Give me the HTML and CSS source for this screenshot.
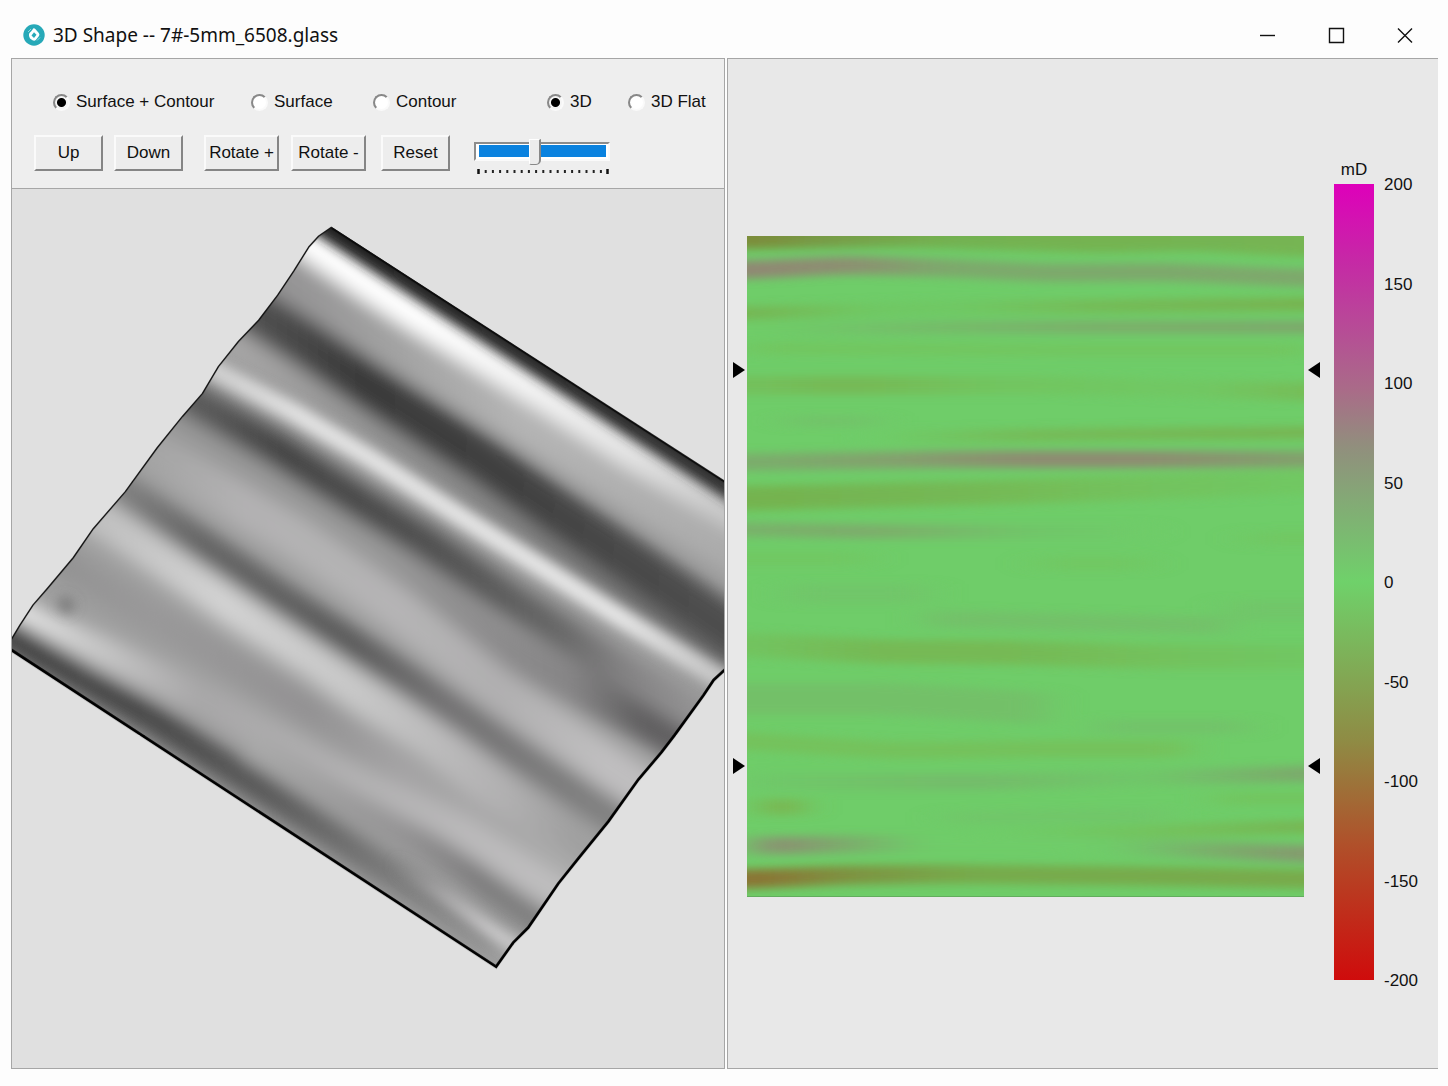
FILE: index.html
```html
<!DOCTYPE html>
<html lang="en">
<head>
<meta charset="utf-8">
<meta name="viewport" content="width=device-width, initial-scale=1">
<title>3D Shape -- 7#-5mm_6508.glass</title>
<link rel="stylesheet" href="styles.css">
</head>
<body>
<div class="window">
  <header class="titlebar">
    <svg class="app-icon" viewBox="0 0 22 22" aria-hidden="true">
      <circle cx="11" cy="11" r="10.700" fill="#27a9b8"/>
      <path d="M10.500 4.300 Q11.500 4 12.300 5 L15.800 9 Q17 10.300 16 12 L13 15.800 Q11.500 17.300 9.500 16.300 L7 14.500 Q5.500 12.500 6 10 Q6.300 8.500 8 7.500 Z" fill="#fff"/>
      <path d="M11 8.300 L13.500 10.800 L11 14 L8.500 11.500 Z" fill="#27a9b8"/>
      <path d="M5 8 L8 5 M14 16.500 L17 13.500" stroke="#8fd6dd" stroke-width="1" fill="none"/>
    </svg>
    <h1 class="title">3D Shape -- 7#-5mm_6508.glass</h1>
    <div class="window-buttons">
      <button class="window-button" type="button" aria-label="Minimize"><svg viewBox="0 0 17 17"><path d="M1 8.500H16"/></svg></button>
      <button class="window-button" type="button" aria-label="Maximize"><svg viewBox="0 0 17 17"><path d="M1.500 1.500H15.500V15.500H1.500Z"/></svg></button>
      <button class="window-button" type="button" aria-label="Close"><svg viewBox="0 0 17 17"><path d="M1 1.500L15 15.500M15 1.500L1 15.500"/></svg></button>
    </div>
  </header>

  <main class="panes">
    <section class="shape-pane">
      <form class="toolbar">
        <div class="options">
          <label class="option"><input type="radio" name="layer" checked>Surface + Contour</label>
          <label class="option"><input type="radio" name="layer">Surface</label>
          <label class="option"><input type="radio" name="layer">Contour</label>
          <label class="option"><input type="radio" name="view" checked>3D</label>
          <label class="option"><input type="radio" name="view">3D Flat</label>
        </div>
        <div class="actions">
          <button class="push" type="button">Up</button>
          <button class="push" type="button">Down</button>
          <button class="push wide" type="button">Rotate +</button>
          <button class="push wide" type="button">Rotate -</button>
          <button class="push" type="button">Reset</button>
          <div class="zoom">
            <input class="slider" type="range" min="0" max="18" value="8" aria-label="Scale">
            <svg class="ticks" viewBox="0 0 136 6" aria-hidden="true">
              <path d="M11.700 2v3M18.900 2v3M26.100 2v3M33.300 2v3M40.500 2v3M47.700 2v3M54.900 2v3M62.100 2v3M69.300 2v3M76.500 2v3M83.700 2v3M90.900 2v3M98.100 2v3M105.300 2v3M112.500 2v3M119.700 2v3M126.900 2v3" stroke="#222" stroke-width="2"/>
              <path d="M4.500 1v5M133.500 1v5" stroke="#111" stroke-width="2.500"/>
            </svg>
          </div>
        </div>
      </form>

      <div class="stage">
        <svg class="surface" viewBox="12 190 712 877" preserveAspectRatio="xMinYMin slice" role="img" aria-label="Surface view">
          <defs>
            <clipPath id="sheet"><path d="M331 228L318 237L308 248L293 272L277 296L258 321L238 342L218 367L202 394L182 417L157 448L125 492L93 529L73 558L47 589L33 605L20 625L11 640V650L495 966L512 942L527 927L557 883L577 858L607 821L637 779L660 752L673 735L702 695L712 680L726 667V484Z"/></clipPath>
            <filter id="soft" filterUnits="userSpaceOnUse" x="-60" y="150" width="900" height="900"><feGaussianBlur stdDeviation="9"/></filter>
            <filter id="fine" filterUnits="userSpaceOnUse" x="-60" y="150" width="900" height="900"><feGaussianBlur stdDeviation="6"/></filter>
            <linearGradient id="s1" gradientUnits="userSpaceOnUse" x1="0" y1="0" x2="1000" y2="0"><stop offset=".33" stop-color="#222"/><stop offset=".72" stop-color="#343434"/></linearGradient>
            <linearGradient id="s2" gradientUnits="userSpaceOnUse" x1="0" y1="0" x2="1000" y2="0"><stop offset=".42" stop-color="#fff"/><stop offset=".54" stop-color="#f2f2f2"/><stop offset=".63" stop-color="#e4e4e4"/><stop offset=".72" stop-color="#cacaca"/></linearGradient>
            <linearGradient id="s3" gradientUnits="userSpaceOnUse" x1="0" y1="0" x2="1000" y2="0"><stop offset=".29" stop-color="#959495"/><stop offset=".38" stop-color="#a0a0a0"/><stop offset=".52" stop-color="#b4b4b4"/><stop offset=".72" stop-color="#acacac"/></linearGradient>
            <linearGradient id="s4" gradientUnits="userSpaceOnUse" x1="0" y1="0" x2="1000" y2="0"><stop offset=".26" stop-color="#505050"/><stop offset=".36" stop-color="#3a3a3a"/><stop offset=".5" stop-color="#404040"/><stop offset=".71" stop-color="#4e4e4e"/></linearGradient>
            <linearGradient id="s4b" gradientUnits="userSpaceOnUse" x1="0" y1="0" x2="1000" y2="0"><stop offset=".24" stop-color="#a6a5a5"/><stop offset=".36" stop-color="#949494"/><stop offset=".5" stop-color="#848484"/><stop offset=".71" stop-color="#666"/></linearGradient>
            <linearGradient id="s5" gradientUnits="userSpaceOnUse" x1="0" y1="0" x2="1000" y2="0"><stop offset=".22" stop-color="#d0d0d0"/><stop offset=".3" stop-color="#e2e2e2"/><stop offset=".62" stop-color="#e6e6e6"/><stop offset=".71" stop-color="#c8c8c8"/></linearGradient>
            <linearGradient id="s6" gradientUnits="userSpaceOnUse" x1="0" y1="0" x2="1000" y2="0"><stop offset=".2" stop-color="#5a5a5a"/><stop offset=".28" stop-color="#444"/><stop offset=".43" stop-color="#505050"/><stop offset=".56" stop-color="#686868"/><stop offset=".62" stop-color="#828182"/><stop offset=".7" stop-color="#949394"/></linearGradient>
            <linearGradient id="s7" gradientUnits="userSpaceOnUse" x1="0" y1="0" x2="1000" y2="0"><stop offset=".19" stop-color="#979797"/><stop offset=".37" stop-color="#989898"/><stop offset=".49" stop-color="#8d8c8d"/><stop offset=".57" stop-color="#868586"/><stop offset=".64" stop-color="#605f60"/></linearGradient>
            <linearGradient id="s8" gradientUnits="userSpaceOnUse" x1="0" y1="0" x2="1000" y2="0"><stop offset=".15" stop-color="#a4a4a4"/><stop offset=".24" stop-color="#b2b1b2"/><stop offset=".4" stop-color="#b5b4b5"/><stop offset=".5" stop-color="#b0afb0"/><stop offset=".6" stop-color="#bfbebf"/></linearGradient>
            <linearGradient id="s9" gradientUnits="userSpaceOnUse" x1="0" y1="0" x2="1000" y2="0"><stop offset=".12" stop-color="#808080"/><stop offset=".2" stop-color="#646464"/><stop offset=".35" stop-color="#5a5a5a"/><stop offset=".44" stop-color="#727172"/><stop offset=".6" stop-color="#808080"/></linearGradient>
            <linearGradient id="s10" gradientUnits="userSpaceOnUse" x1="0" y1="0" x2="1000" y2="0"><stop offset=".1" stop-color="#c0c0c0"/><stop offset=".22" stop-color="#d2d2d2"/><stop offset=".35" stop-color="#c8c8c8"/><stop offset=".5" stop-color="#b2b1b2"/><stop offset=".57" stop-color="#a0a0a0"/></linearGradient>
            <linearGradient id="s11" gradientUnits="userSpaceOnUse" x1="0" y1="0" x2="1000" y2="0"><stop offset=".05" stop-color="#929292"/><stop offset=".15" stop-color="#999899"/><stop offset=".31" stop-color="#939293"/><stop offset=".4" stop-color="#a4a3a4"/><stop offset=".55" stop-color="#aaa"/></linearGradient>
            <linearGradient id="s12" gradientUnits="userSpaceOnUse" x1="0" y1="0" x2="1000" y2="0"><stop offset=".02" stop-color="#e8e8e8"/><stop offset=".08" stop-color="#ccc"/><stop offset=".2" stop-color="#a8a7a8"/><stop offset=".32" stop-color="#b0afb0"/><stop offset=".53" stop-color="#bebdbe"/></linearGradient>
            <linearGradient id="s13" gradientUnits="userSpaceOnUse" x1="0" y1="0" x2="1000" y2="0"><stop offset=".25" stop-color="#aaa"/><stop offset=".4" stop-color="#949394"/><stop offset=".48" stop-color="#7b7a7b"/><stop offset=".53" stop-color="#7e7e7e"/></linearGradient>
            <linearGradient id="s14" gradientUnits="userSpaceOnUse" x1="0" y1="0" x2="1000" y2="0"><stop offset=".39" stop-color="#8c8c8c" stop-opacity="0"/><stop offset=".44" stop-color="#a5a4a5"/><stop offset=".49" stop-color="#c8c7c8"/></linearGradient>
            <linearGradient id="s15" gradientUnits="userSpaceOnUse" x1="0" y1="0" x2="1000" y2="0"><stop offset=".02" stop-color="#404040"/><stop offset=".15" stop-color="#484848"/><stop offset=".27" stop-color="#5a5a5a"/><stop offset=".34" stop-color="#6c6c6c"/><stop offset=".48" stop-color="#909090"/></linearGradient>
          </defs>
          <g clip-path="url(#sheet)">
            <path d="M0 180H740V1000H0Z" fill="#9e9e9e"/>
            <g filter="url(#soft)" fill="none" stroke-linejoin="round">
              <path d="M260 262L295 285L370 333L527 425L660 507L760 567" stroke="url(#s3)" stroke-width="44"/>
              <path d="M200 320L243 347L370 427L480 500L627 590L760 670" stroke="url(#s4b)" stroke-width="34"/>
              <path d="M220 290L262 317L303 343L370 388L477 457L560 515L627 560L710 617L780 664" stroke="url(#s4)" stroke-width="46"/>
              <path d="M150 410L190 437L277 484L370 545L493 640L560 677L647 722L700 752" stroke="url(#s7)" stroke-width="40"/>
              <path d="M120 430L157 455L243 507L293 537L400 612L510 700L593 757L670 808" stroke="url(#s8)" stroke-width="42"/>
              <path d="M160 378L198 404L277 450L360 503L427 544L510 600L567 636L640 682L720 730" stroke="url(#s6)" stroke-width="34"/>
              <path d="M70 500L110 522L160 556L233 606L317 660L363 694L427 736L493 787L560 830L620 870" stroke="url(#s10)" stroke-width="42"/>
              <path d="M90 468L133 498L197 542L277 596L360 650L410 682L493 738L543 772L593 805L660 850" stroke="url(#s9)" stroke-width="32"/>
              <path d="M30 540L83 575L133 606L200 645L317 715L370 748L427 787L580 880" stroke="url(#s11)" stroke-width="30"/>
              <path d="M-20 592L30 623L100 652L200 698L317 764L460 832L527 875L600 920" stroke="url(#s12)" stroke-width="34"/>
              <path d="M250 745L333 795L427 845L470 873L520 909L580 950" stroke="url(#s13)" stroke-width="26"/>
              <path d="M-20 617L30 647L67 669L150 718L267 793L333 836L400 880L495 942" stroke="url(#s15)" stroke-width="30"/>
              <path d="M270 216L315 248L370 286L410 312L547 397L627 450L723 507L760 529" stroke="url(#s2)" stroke-width="34"/>
            </g>
            <g filter="url(#fine)" fill="none" stroke-linejoin="round">
              <path d="M311 215L331 228L760 506" stroke="url(#s1)" stroke-width="28"/>
              <path d="M170 344L218 373L293 413L365 456L460 517L547 572L610 612L707 672L760 705" stroke="url(#s5)" stroke-width="19"/>
              <path d="M390 862L443 894L487 927L520 950" stroke="url(#s14)" stroke-width="15"/>
              <path d="M60 600L72 610" stroke="#6c6c6c" stroke-width="14" opacity=".7"/>
            </g>
          </g>
          <path d="M726 484L331 229" fill="none" stroke="#0c0c0c" stroke-width="2"/>
          <path d="M331 228L318 237L308 248L293 272L277 296L258 321L238 342L218 367L202 394L182 417L157 448L125 492L93 529L73 558L47 589L33 605L20 625L11 640" fill="none" stroke="#111" stroke-width="1.400" stroke-linejoin="round"/>
          <path d="M10 649L495 966L512 942L527 927L557 883L577 858L607 821L637 779L660 752L673 735L702 695L712 680L726 667" fill="none" stroke="#000" stroke-width="2.800"/>
        </svg>
      </div>
    </section>

    <section class="map-pane">
      <div class="map">
        <svg class="heat" viewBox="0 0 557 660" preserveAspectRatio="none" role="img" aria-label="Distortion map">
          <defs>
            <filter id="haze" filterUnits="userSpaceOnUse" x="-80" y="-40" width="720" height="740"><feGaussianBlur stdDeviation="18 4"/></filter>
            <linearGradient id="ga" gradientUnits="userSpaceOnUse" x1="0" y1="0" x2="1000" y2="0"><stop offset=".01" stop-color="#7c8c3a"/><stop offset=".06" stop-color="#789845"/><stop offset=".2" stop-color="#73b151"/><stop offset=".557" stop-color="#76b552"/></linearGradient>
            <linearGradient id="gb" gradientUnits="userSpaceOnUse" x1="0" y1="0" x2="1000" y2="0"><stop offset=".02" stop-color="#908873"/><stop offset=".11" stop-color="#8c9071"/><stop offset=".2" stop-color="#7da96c"/><stop offset=".557" stop-color="#7ea86c"/></linearGradient>
            <linearGradient id="gc" gradientUnits="userSpaceOnUse" x1="0" y1="0" x2="1000" y2="0"><stop offset="0" stop-color="#76b552"/><stop offset=".12" stop-color="#70c763"/><stop offset=".22" stop-color="#70c763"/><stop offset=".35" stop-color="#75ba56"/><stop offset=".557" stop-color="#77b350"/></linearGradient>
            <linearGradient id="gd" gradientUnits="userSpaceOnUse" x1="0" y1="0" x2="1000" y2="0"><stop offset=".02" stop-color="#6fcc68"/><stop offset=".15" stop-color="#74be69"/><stop offset=".32" stop-color="#7ab06a"/><stop offset=".557" stop-color="#7da86c"/></linearGradient>
            <linearGradient id="gf" gradientUnits="userSpaceOnUse" x1="0" y1="0" x2="1000" y2="0"><stop offset="0" stop-color="#73c15d"/><stop offset=".1" stop-color="#77b855"/><stop offset=".25" stop-color="#72c560"/><stop offset=".45" stop-color="#71c864"/><stop offset=".557" stop-color="#76bd58"/></linearGradient>
            <linearGradient id="gh" gradientUnits="userSpaceOnUse" x1="0" y1="0" x2="1000" y2="0"><stop offset=".14" stop-color="#6fcc68"/><stop offset=".28" stop-color="#76ba57"/><stop offset=".557" stop-color="#77b552"/></linearGradient>
            <linearGradient id="gi" gradientUnits="userSpaceOnUse" x1="0" y1="0" x2="1000" y2="0"><stop offset="0" stop-color="#7bad6c"/><stop offset=".15" stop-color="#84a06e"/><stop offset=".28" stop-color="#8e8b72"/><stop offset=".4" stop-color="#8e8c72"/><stop offset=".557" stop-color="#82a16d"/></linearGradient>
            <linearGradient id="gj" gradientUnits="userSpaceOnUse" x1="0" y1="0" x2="1000" y2="0"><stop offset=".02" stop-color="#75b350"/><stop offset=".23" stop-color="#75b955"/><stop offset=".38" stop-color="#73c25d"/><stop offset=".557" stop-color="#71c863"/></linearGradient>
            <linearGradient id="gk" gradientUnits="userSpaceOnUse" x1="0" y1="0" x2="1000" y2="0"><stop offset="0" stop-color="#79b16b"/><stop offset=".12" stop-color="#7eab6c"/><stop offset=".28" stop-color="#71c569"/><stop offset=".4" stop-color="#6fcc69"/></linearGradient>
            <linearGradient id="gn" gradientUnits="userSpaceOnUse" x1="0" y1="0" x2="1000" y2="0"><stop offset="0" stop-color="#72c460"/><stop offset=".13" stop-color="#76b955"/><stop offset=".26" stop-color="#76b955"/><stop offset=".42" stop-color="#73c25d"/><stop offset=".557" stop-color="#71c763"/></linearGradient>
            <linearGradient id="gq" gradientUnits="userSpaceOnUse" x1="0" y1="0" x2="1000" y2="0"><stop offset=".02" stop-color="#70c869"/><stop offset=".22" stop-color="#74bb6a"/><stop offset=".4" stop-color="#70c769"/><stop offset=".557" stop-color="#7ca96c"/></linearGradient>
            <linearGradient id="gs" gradientUnits="userSpaceOnUse" x1="0" y1="0" x2="1000" y2="0"><stop offset=".24" stop-color="#6fcc68"/><stop offset=".4" stop-color="#73c35e"/><stop offset=".557" stop-color="#77b653"/></linearGradient>
            <linearGradient id="gt" gradientUnits="userSpaceOnUse" x1="0" y1="0" x2="1000" y2="0"><stop offset=".03" stop-color="#8b9072"/><stop offset=".1" stop-color="#7cac6c"/><stop offset=".18" stop-color="#6fcc69"/><stop offset=".36" stop-color="#6fcc69"/><stop offset=".47" stop-color="#7bad6b"/><stop offset=".557" stop-color="#859a6f"/></linearGradient>
            <linearGradient id="gu" gradientUnits="userSpaceOnUse" x1="0" y1="0" x2="1000" y2="0"><stop offset=".02" stop-color="#8a7535"/><stop offset=".1" stop-color="#7e9241"/><stop offset=".22" stop-color="#77aa4b"/><stop offset=".557" stop-color="#78aa4b"/></linearGradient>
          </defs>
          <path d="M0 0H557V660H0Z" fill="#6fcd69"/>
          <g filter="url(#haze)" fill="none" stroke-linejoin="round">
            <path d="M-60 -2H0L150 -4L350 2L450 0L557 6H620" stroke="url(#ga)" stroke-width="30"/>
            <path d="M-60 34H0L100 29L200 32L300 37L420 36L557 42H620" stroke="url(#gb)" stroke-width="18"/>
            <path d="M-60 77H0L200 71L350 70L557 68H620" stroke="url(#gc)" stroke-width="13"/>
            <path d="M-60 94H0L200 91L620 91" stroke="url(#gd)" stroke-width="13"/>
            <path d="M0 112L330 114H560" stroke="#74c35c" stroke-width="12" opacity=".7"/>
            <path d="M-60 149H300L620 157" stroke="url(#gf)" stroke-width="18"/>
            <path d="M40 185H130" stroke="#74bd69" stroke-width="10" opacity=".6"/>
            <path d="M130 201L350 198L620 196" stroke="url(#gh)" stroke-width="12"/>
            <path d="M-60 226H0L200 223H620" stroke="url(#gi)" stroke-width="17"/>
            <path d="M-60 262H0L250 256L557 246H620" stroke="url(#gj)" stroke-width="24"/>
            <path d="M-60 293H0L120 295H400" stroke="url(#gk)" stroke-width="14"/>
            <path d="M500 302H620M-40 322H120M290 327H400" stroke="#74c45d" stroke-width="14" opacity=".5"/>
            <path d="M40 357H180M480 374H620" stroke="#73c169" stroke-width="20" opacity=".6"/>
            <path d="M180 382L340 386L480 389" stroke="#76b96a" stroke-width="17" opacity=".6"/>
            <path d="M-60 408H0L130 415L260 416L400 420L620 420" stroke="url(#gn)" stroke-width="24"/>
            <path d="M-60 462H140L300 472" stroke="#75bb6a" stroke-width="32" opacity=".7"/>
            <path d="M350 490H500" stroke="#74bd6a" stroke-width="14" opacity=".6"/>
            <path d="M-40 502L150 514L300 512L440 512" stroke="#75bf59" stroke-width="17" opacity=".85"/>
            <path d="M0 545H250L557 537H620" stroke="url(#gq)" stroke-width="16"/>
            <path d="M18 570H52" stroke="#7db04c" stroke-width="16"/>
            <path d="M470 562H620" stroke="#73c35d" stroke-width="12" opacity=".8"/>
            <path d="M200 581L420 578" stroke="#73c169" stroke-width="12" opacity=".6"/>
            <path d="M240 600L350 596L557 590H620" stroke="url(#gs)" stroke-width="13"/>
            <path d="M6 609L120 607H300L557 617H620" stroke="url(#gt)" stroke-width="17"/>
            <path d="M-60 642H0L100 638L200 637L400 639L557 642H620" stroke="url(#gu)" stroke-width="19"/>
          </g>
          <path d="M0 659.500H557" stroke="#62ad5d" stroke-width="1"/>
        </svg>
        <svg class="marker left upper" viewBox="0 0 12 16"><path d="M0 0L12 8L0 16Z"/></svg>
        <svg class="marker left lower" viewBox="0 0 12 16"><path d="M0 0L12 8L0 16Z"/></svg>
        <svg class="marker right upper" viewBox="0 0 12 16"><path d="M12 0L0 8L12 16Z"/></svg>
        <svg class="marker right lower" viewBox="0 0 12 16"><path d="M12 0L0 8L12 16Z"/></svg>
      </div>
      <div class="legend">
        <div class="unit">mD</div>
        <div class="scale">
          <div class="ramp"></div>
          <ol class="values">
            <li>200</li><li>150</li><li>100</li><li>50</li><li>0</li><li>-50</li><li>-100</li><li>-150</li><li>-200</li>
          </ol>
        </div>
      </div>
    </section>
  </main>
</div>
</body>
</html>
```
FILE: styles.css
```css
* { box-sizing: border-box; }

body {
  margin: 0;
  background: #fdfdfd;
  color: #111;
  font: 17px/20px "Liberation Sans", Arial, sans-serif;
}

.window {
  display: flex;
  flex-direction: column;
  min-height: 100vh;
  padding: 0 10px 17px 11px;
}

.titlebar {
  display: flex;
  align-items: center;
  height: 58px;
  padding: 12px 24px 0 12px;
}

.app-icon { width: 22px; height: 22px; }

.title {
  flex: 1;
  margin: 0 0 0 8px;
  font: 400 19px/24px "Noto Sans", "Segoe UI", sans-serif;
}

.window-buttons { display: flex; gap: 52px; }

.window-button {
  width: 17px;
  height: 17px;
  padding: 0;
  border: 0;
  background: none;
}

.window-button svg {
  display: block;
  fill: none;
  stroke: #111;
  stroke-width: 1.4;
}

.panes {
  flex: 1;
  display: grid;
  grid-template-columns: 716fr 711fr;
}

.shape-pane {
  display: flex;
  flex-direction: column;
  margin-right: 2px;
  border: 1px solid #a6a6a6;
  border-right: 0;
  background: #eee;
}

.toolbar {
  height: 130px;
  padding: 33px 0 0 22px;
  border-right: 1px solid #a6a6a6;
  border-bottom: 1px solid #a6a6a6;
}

.options {
  display: grid;
  grid-template-columns: 198px 122px 174px 81px auto;
  padding-left: 19px;
}

.option {
  display: flex;
  align-items: center;
  gap: 6px;
  white-space: nowrap;
}

.option input {
  appearance: none;
  width: 17px;
  height: 17px;
  margin: 0;
  border: 2px solid;
  border-color: #888 #fafafa #fafafa #888;
  border-radius: 50%;
  background: #fff;
}

.option input:checked {
  background: radial-gradient(circle, #000 4px, #f4f4f4 5px);
}

.actions {
  display: grid;
  grid-template-columns: 80px 90px 87px 90px 93px auto;
  margin-top: 23px;
}

.push {
  width: 69px;
  height: 36px;
  padding: 0;
  border: 2px solid;
  border-color: #fafafa #858585 #858585 #fafafa;
  background: #ededed;
  color: inherit;
  font: inherit;
  white-space: nowrap;
}

.push.wide { width: 75px; }

.zoom { width: 136px; padding-top: 3px; }

.slider {
  display: block;
  appearance: none;
  width: 100%;
  height: 26px;
  margin: 0;
  background: none;
}

.slider::-webkit-slider-runnable-track {
  height: 19px;
  border: 2px solid;
  border-color: #8c8c8c #fafafa #fafafa #8c8c8c;
  background: linear-gradient(#0a82df, #0a82df) center / 127px 12px no-repeat, #fff;
}

.slider::-webkit-slider-thumb {
  appearance: none;
  width: 12px;
  height: 26px;
  margin-top: -5px;
  border: 1px solid;
  border-color: #fff #888 #888 #fff;
  border-right-width: 2px;
  border-radius: 0 0 5px 2px;
  background: #ececec;
}

.ticks { display: block; width: 100%; height: 6px; margin-top: 4px; }

.stage {
  flex: 1;
  position: relative;
  min-height: 400px;
  border-right: 1px solid #a6a6a6;
  background: #e0e0e0;
}

.surface {
  position: absolute;
  inset: 0;
  width: 100%;
  height: 100%;
}

.map-pane {
  display: flex;
  border: 1px solid #a6a6a6;
  border-right: 0;
  background: #e8e8e8;
}

.map {
  flex: 1;
  position: relative;
  margin: 177px 30px 171px 19px;
}

.heat { display: block; width: 100%; height: 100%; position: absolute; inset: 0; }

.marker { position: absolute; width: 12px; height: 16px; }
.marker.left { left: -14px; }
.marker.right { right: -16px; }
.marker.upper { top: 19%; }
.marker.lower { top: 79%; }

.legend {
  display: flex;
  flex-direction: column;
  padding: 99px 0 88px;
}

.unit { width: 40px; height: 26px; line-height: 24px; text-align: center; }

.scale { flex: 1; display: flex; gap: 10px; }

.ramp {
  width: 40px;
  background: linear-gradient(#de00ba, #c52aa5 10%, #a96c88 26%, #918f7d 33%, #6fd16a 50%, #8f8b44 70%, #b0502a 83%, #cf0c0c);
}

.values {
  display: flex;
  flex-direction: column;
  justify-content: space-between;
  width: 54px;
  margin: -9px 0 -11px;
  padding: 0;
  list-style: none;
}
```
